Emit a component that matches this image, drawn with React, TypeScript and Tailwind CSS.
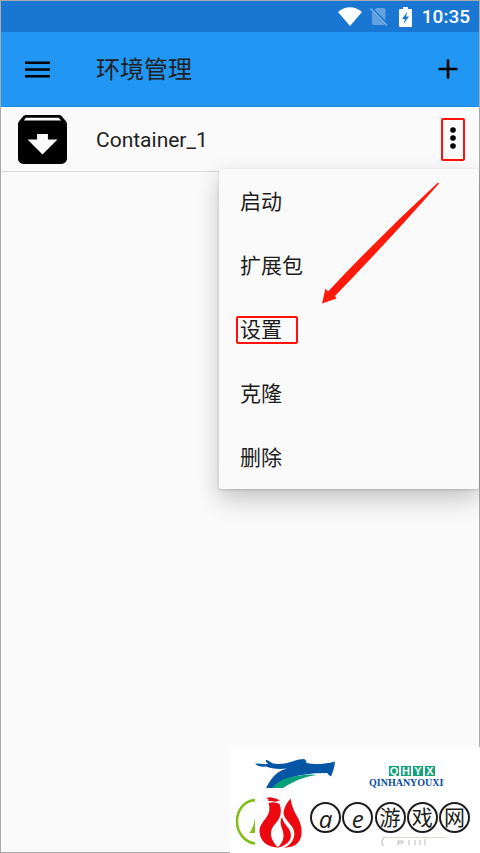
import { useState } from "react";

const menuItems = [
    { id: "start", label: "启动" },
    { id: "packages", label: "扩展包" },
    { id: "settings", label: "设置", marked: true },
    { id: "clone", label: "克隆" },
    { id: "delete", label: "删除" },
];

function StatusBar() {
    return (
        <div className="flex h-[31px] items-center justify-end bg-[#1976d2] pr-[9px] text-white">
            <svg width="24" height="19" viewBox="0 0 24 19" fill="currentColor">
                <path d="M0 5C3.400 2 7.500 0.300 12 0.300S20.600 2 24 5L12 19z" />
            </svg>
            <svg className="ml-2" width="18" height="19" viewBox="0 0 18 19">
                <path d="M6.500 1H13.500Q15.500 1 15.500 3V13.500L4.500 2.800zM2 4.500L14.500 17.500Q14 18 13 18H4Q2 18 2 16z" fill="#fff" opacity=".32" />
                <path d="M0.500 1.500L17 18.500" stroke="#8fb9e6" strokeWidth="1.300" />
            </svg>
            <svg className="ml-[11px]" width="13" height="20" viewBox="0 0 13 20">
                <path d="M4 0H9V2H12Q13 2 13 3.200V18.800Q13 20 12 20H1Q0 20 0 18.800V3.200Q0 2 1 2H4z" fill="#fff" />
                <path d="M8.500 4.500L3 12H6L4.500 17L10 9.500H7z" fill="#1976d2" />
            </svg>
            <span className="ml-2.5 text-[19px] leading-6 font-medium">10:35</span>
        </div>
    );
}

function Toolbar() {
    return (
        <header className="flex h-[75px] items-center border-b border-[#1e88e5] bg-[#2196f3] pr-[21px] pl-6 text-[#212121]">
            <button aria-label="菜单" className="text-black">
                <svg width="25" height="17" viewBox="0 0 25 17" fill="currentColor">
                    <path d="M0 0.500H25V3H0zM0 7.300H25V9.800H0zM0 14H25V16.500H0z" />
                </svg>
            </button>
            <h1 className="ml-[46px] flex-1 pt-0.5 text-2xl">环境管理</h1>
            <button aria-label="添加" className="text-black">
                <svg width="20" height="20" viewBox="0 0 20 20" fill="currentColor">
                    <path d="M8.700 0.500H11.300V8.700H19.500V11.300H11.300V19.500H8.700V11.300H0.500V8.700H8.700z" />
                </svg>
            </button>
        </header>
    );
}

function PopupMenu() {
    return (
        <div className="absolute top-[62px] right-0 w-[260px] rounded-xs bg-[#fafafa] shadow-[0_10px_24px_rgba(0,0,0,0.22),0_1px_3px_rgba(0,0,0,0.16)]">
            {menuItems.map((item) => (
                <button key={item.id} className="flex h-16 w-full items-center pt-px pl-[17px] text-left text-[21px] leading-6 text-[#1c1c1c]">
                    <span className={item.marked ? "w-[62px] rounded-xs border-2 border-[#ff120a] pl-0.5" : "pl-1"}>
                        {item.label}
                    </span>
                </button>
            ))}
            {/* Pointer arrow over the menu */}
            <svg className="pointer-events-none absolute top-3 left-[102px]" width="120" height="124" viewBox="0 0 120 124" fill="#ff1a0c">
                <path d="M117 1.500L118 2.500Q70 57 14 115L15.500 117.500L1 122.500L4.500 107.500L7 110.500Q60 54 117 1.500Z" />
            </svg>
        </div>
    );
}

function Watermark() {
    const letters = ["a", "e", "游", "戏", "网"];

    return (
        <div className="absolute -right-px -bottom-px flex h-[106px] w-[250px] bg-white">
            <svg className="shrink-0" width="80" height="106" viewBox="0 0 80 106" overflow="visible">
                <path d="M25 16.500C29 16.500 33 17.500 38 17L35.500 14Q36 12.500 38 13.500L43 16.500C50 17.500 57 16.500 63 14.300C67 12.300 71 12.500 74 12Q76 12.500 76.500 16C85 18 96 17 105 14.500Q104.500 21 103 24L101.500 28.500Q100.500 30 99 28L97 26C88 26 75 26.500 63 30C55 32.500 49 36 45 41H36C39 35 43 29 48 25.500Q51 23 57 21.500C48 22.500 41 21.500 36 19.500Q29 20.500 25 16.500z" fill="#0755a5" />
                <path d="M42.500 41C46 35 56 30 70 28.500Q79 27 87 28C74 29.500 62 35 53 41z" fill="#08a078" />
                <path d="M25 53C13 54 7 64 7 74.500S14 95 25 96.500" fill="none" stroke="#80bd16" strokeWidth="2.500" />
                <path d="M25 70V86H19.500Q24 80 25 70z" fill="#80bd16" />
                <g fill="#ed0710">
                    <path d="M36 51.500Q40 49.500 43 51Q47 51 49.500 53.500Q46 55.500 42 54L38 54Q40 52 36 51.500z" />
                    <path d="M38.500 56Q44 54 49.500 57C52 64 51 70 46 76C40 82 38 90 48 100.500C36 100 29.500 93 29.500 84C30 73 43 70 38.500 56z" />
                    <path d="M60.500 51.500C62 60 64 64 68 71C74 83 73 96 62 99.500L54 101C65 96 66.500 86 62 79.500C57 73 52 69 54 63Q55 58 60.500 51.500z" />
                    <path d="M52 70C53 75 56 78 59 82C64 91 59 98 47 101C54 95 54.500 89 52.500 83Q49 75 52 70z" />
                </g>
            </svg>
            <div className="flex w-40 flex-col">
                <div className="mt-[19px] ml-[79px] flex gap-0.5 font-['Liberation_Sans',sans-serif] text-[11px] leading-[10px] font-bold text-white">
                    {["Q", "H", "Y", "X"].map((letter) => (
                        <span key={letter} className="w-2.5 bg-[#12a477] text-center">{letter}</span>
                    ))}
                </div>
                <div className="ml-[59px] font-['Liberation_Serif',serif] text-[10px] leading-[14px] font-bold text-[#084da0]">QINHANYOUXI</div>
                <div className="mt-3 flex justify-between leading-[26px] text-[#1c1c1c]">
                    {letters.map((letter) => (
                        <span
                            key={letter}
                            className={`flex size-[31px] items-center justify-center rounded-full border-2 border-[#1c1c1c] ${letter < "z" ? "pt-0.5 font-['Open_Sans',sans-serif] text-2xl italic" : "text-[21px]"}`}
                        >
                            {letter}
                        </span>
                    ))}
                </div>
                <svg className="mt-1 ml-[70px]" width="70" height="10" viewBox="0 0 70 10" fill="none" stroke="#bbb">
                    <path d="M2 0.500H66" stroke="#ddd9d0" />
                    <path d="M4 2L2 3V8H4M18 8V4H23V6H18M29 3V8M35 3V8M40 3V8M45 2V8" />
                </svg>
            </div>
        </div>
    );
}

export default function App() {
    const [menuOpen, setMenuOpen] = useState(true);

    return (
        <div className="relative min-h-screen border border-[#aaa] bg-[#fafafa] font-['Roboto','Noto_Sans_CJK_SC',sans-serif]">
            <StatusBar />
            <Toolbar />
            <main className="relative">
                <div className="flex h-[65px] items-center border-b border-[#d8d8d8] pt-px pr-3.5 pl-[17px]">
                    <svg width="49" height="49" viewBox="3 3 18 18">
                        <path d="M20.540 5.230l-1.390-1.680C18.880 3.210 18.470 3 18 3H6c-.47 0-.88.21-1.160.55L3.460 5.230C3.170 5.570 3 6.020 3 6.500V19c0 1.100.9 2 2 2h14c1.100 0 2-.9 2-2V6.500c0-.48-.17-.93-.46-1.270zM12 17.500L6.500 12H10v-2h4v2h3.500L12 17.500zM5.120 5l.81-1h12l.94 1H5.120z" />
                    </svg>
                    <span className="ml-[29px] flex-1 pt-0.5 text-[21px] text-[#212121]">Container_1</span>
                    <button
                        aria-label="更多"
                        onClick={() => setMenuOpen(!menuOpen)}
                        className="flex h-[43px] w-6 justify-center rounded-xs border-2 border-[#ff120a] pt-[7px]"
                    >
                        <svg width="6" height="22" viewBox="0 0 6 22">
                            <circle cx="3" cy="3" r="2.800" />
                            <circle cx="3" cy="11" r="2.800" />
                            <circle cx="3" cy="19" r="2.800" />
                        </svg>
                    </button>
                </div>
                {menuOpen && <PopupMenu />}
            </main>
            <Watermark />
        </div>
    );
}
